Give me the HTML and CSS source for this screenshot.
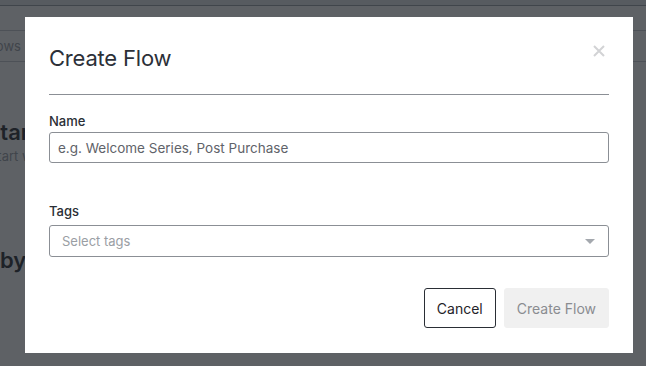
FILE: index.html
```html
<!DOCTYPE html>
<html lang="en">
<head>
    <meta charset="UTF-8">
    <meta name="viewport" content="width=device-width, initial-scale=1.0">
    <title>Create Flow</title>
    <link rel="stylesheet" href="styles.css">
</head>
<body>
    <!-- page behind the modal -->
    <div class="page">
        <div class="topbar"></div>
        <div class="subbar"></div>
        <div class="tabs">
            <span class="tab">Flows</span>
        </div>
        <div class="content">
            <h2 class="page-title">Start</h2>
            <p class="page-sub">Start with a template</p>
            <h3 class="section-title">by</h3>
        </div>
    </div>

    <div class="overlay"></div>

    <div class="modal">
        <div class="modal-header">
            <h1>Create Flow</h1>
            <button type="button" class="close" aria-label="Close">
                <svg width="12" height="12" viewBox="0 0 12 12">
                    <path d="M1 1 L11 11 M11 1 L1 11" stroke="currentColor" stroke-width="2" fill="none"/>
                </svg>
            </button>
        </div>
        <form class="modal-body">
            <label for="flow_name">Name</label>
            <input type="text" id="flow_name" placeholder="e.g. Welcome Series, Post Purchase">

            <label for="flow_tags" class="tags-label">Tags</label>
            <div class="select" id="flow_tags">
                <span class="select-placeholder">Select tags</span>
                <span class="caret"></span>
            </div>

            <div class="actions">
                <button type="button" class="btn btn-cancel">Cancel</button>
                <button type="button" class="btn btn-create" disabled>Create Flow</button>
            </div>
        </form>
    </div>
</body>
</html>
```

FILE: styles.css
```css
body {
    font-family: 'Inter', 'Noto Sans', sans-serif;
    background-color: #ffffff;
    margin: 0;
    padding: 0;
    width: 646px;
    height: 366px;
    overflow: hidden;
}

.page {
    height: 366px;
}

.topbar {
    height: 5px;
    background-color: #e8eaed;
    border-bottom: 1px solid #9aa0a8;
}

.subbar {
    height: 24px;
    border-bottom: 1px solid #c6cad0;
}

.tabs {
    height: 30px;
    border-bottom: 1px solid #c6cad0;
    display: flex;
    align-items: center;
}

.tab {
    font-size: 13px;
    color: #9ba0a8;
    margin-left: -15px;
}

.page-title {
    font-size: 22px;
    font-weight: 600;
    line-height: 27px;
    color: #2a2e35;
    margin: 57px 0 0 -14px;
}

.page-sub {
    font-size: 13px;
    line-height: 16px;
    color: #9ba0a8;
    margin: 2px 0 0 -11px;
}

.section-title {
    font-size: 22px;
    font-weight: 600;
    line-height: 27px;
    color: #2a2e35;
    margin: 83px 0 0 0;
}

.overlay {
    position: fixed;
    inset: 0;
    background-color: rgba(25, 30, 36, 0.7);
}

.modal {
    position: fixed;
    top: 17px;
    left: 25px;
    width: 608px;
    height: 336px;
    box-sizing: border-box;
    padding: 0 24px 25px;
    background-color: #ffffff;
    display: flex;
    flex-direction: column;
}

.modal-header {
    display: flex;
    justify-content: space-between;
    align-items: flex-start;
    border-bottom: 1px solid #8b8f95;
    height: 77px;
}

h1 {
    font-size: 22px;
    font-weight: 400;
    color: #2c3038;
    margin: 28px 0 0 0;
    letter-spacing: -0.2px;
}

.close {
    background: none;
    border: none;
    padding: 0;
    margin: 28px 4px 0 0;
    color: #d2d3d5;
    cursor: pointer;
    display: flex;
}

.modal-body {
    display: flex;
    flex-direction: column;
    flex: 1;
}

label {
    font-size: 13px;
    line-height: 16px;
    font-weight: 500;
    color: #2a2e35;
    margin: 18px 0 3px;
}

.tags-label {
    margin-top: 40px;
    margin-bottom: 6px;
}

input {
    height: 31px;
    padding: 0 8px;
    font-family: inherit;
    font-size: 13.5px;
    color: #2a2e35;
    border: 1px solid #8b8f95;
    border-radius: 3px;
    box-sizing: border-box;
    width: 100%;
    outline: none;
}

input::placeholder {
    color: #5f636a;
}

.select {
    height: 32px;
    padding: 0 12px;
    border: 1px solid #8b8f95;
    border-radius: 3px;
    box-sizing: border-box;
    display: flex;
    align-items: center;
    justify-content: space-between;
}

.select-placeholder {
    font-size: 13px;
    color: #9a9ea4;
}

.caret {
    width: 0;
    height: 0;
    border-left: 5px solid transparent;
    border-right: 5px solid transparent;
    border-top: 5px solid #a4a8ae;
    margin-right: 1px;
}

.actions {
    margin-top: auto;
    display: flex;
    justify-content: flex-end;
    gap: 8px;
}

.btn {
    height: 40px;
    padding: 0 15px;
    font-family: inherit;
    font-size: 14px;
    border-radius: 3px;
    cursor: pointer;
}

.btn-cancel {
    background-color: #ffffff;
    color: #1f2329;
    border: 1px solid #2a2e35;
    padding: 0 12px;
}

.btn-create {
    background-color: #f0f0f0;
    color: #8a8c90;
    border: 1px solid #f0f0f0;
    padding: 0 12px;
}
```
